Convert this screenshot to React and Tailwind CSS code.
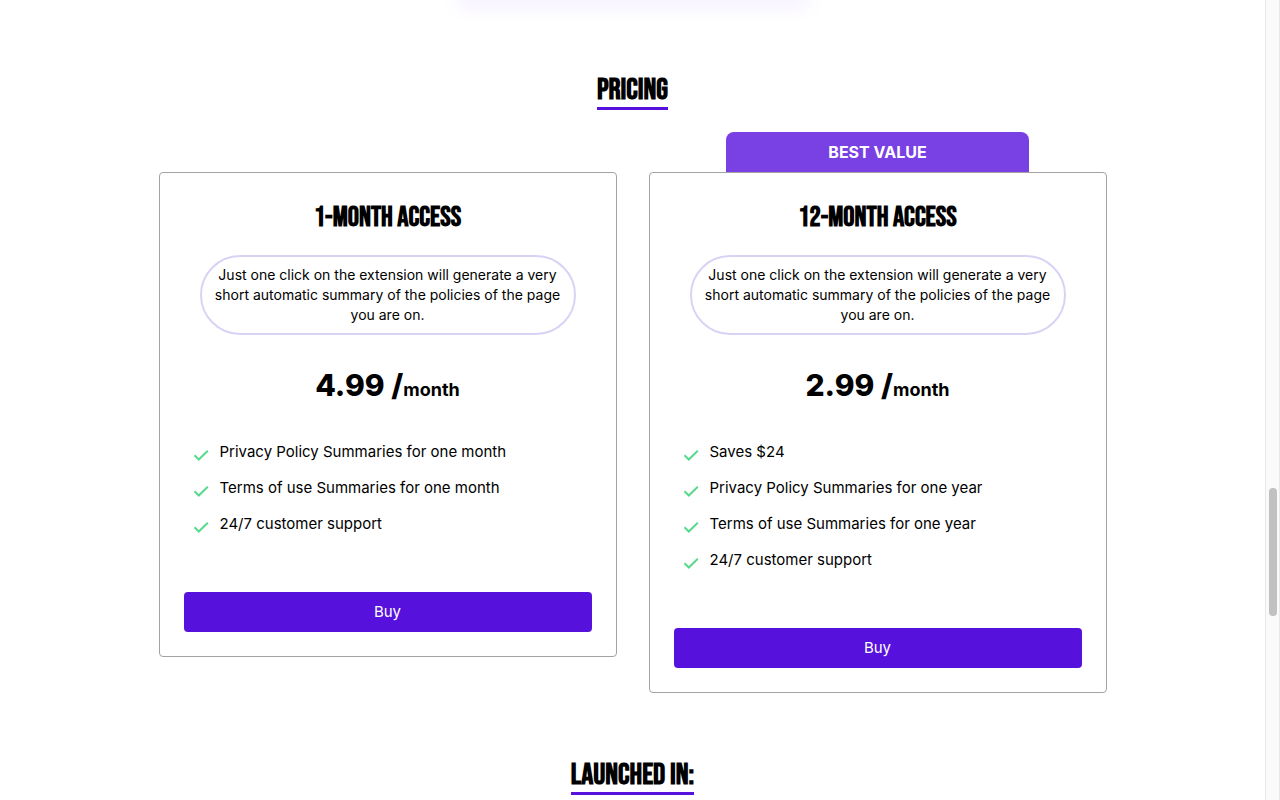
import React from "react";

const display = "font-['Bebas_Neue','Liberation_Sans_Narrow','Roboto_Condensed','Liberation_Sans',sans-serif] font-bold";

const summary =
  "Just one click on the extension will generate a very short automatic summary of the policies of the page you are on.";

const plans = [
  {
    name: "1-MONTH ACCESS",
    price: "4.99",
    features: [
      "Privacy Policy Summaries for one month",
      "Terms of use Summaries for one month",
      "24/7 customer support",
    ],
  },
  {
    name: "12-MONTH ACCESS",
    price: "2.99",
    badge: "BEST VALUE",
    features: [
      "Saves $24",
      "Privacy Policy Summaries for one year",
      "Terms of use Summaries for one year",
      "24/7 customer support",
    ],
  },
];

function Check() {
  return (
    <svg className="mt-2 size-4 shrink-0" viewBox="0 0 16 16" fill="none" stroke="#57d98c" strokeWidth="2" aria-hidden="true">
      <path d="M1.5 7.3 5.8 11.5 14.8 2.8" />
    </svg>
  );
}

function SectionTitle({ children }) {
  return (
    <h2 className={`${display} border-b-[3px] border-[#5611dc] text-[30px] leading-[34px]`}>{children}</h2>
  );
}

function Plan({ plan }) {
  return (
    <div className="flex min-w-0 flex-1 flex-col items-center">
      <div className="flex h-10 w-full justify-center">
        {plan.badge && (
          <p className="w-[66%] rounded-t-lg bg-[#7940e4] text-center font-bold leading-10 text-white">{plan.badge}</p>
        )}
      </div>
      <article className="w-full rounded border border-[#a3a3a3] px-6 pb-6 pt-6 text-center">
        <h3 className={`${display} text-[28px] leading-[42px]`}>{plan.name}</h3>
        <p className="mx-4 mt-4 rounded-full border-2 border-[#d8d3f5] px-2 py-2 text-sm leading-5">{summary}</p>
        <p className="mt-8 text-3xl font-extrabold leading-9">
          {plan.price} /<span className="text-lg font-bold leading-9">month</span>
        </p>
        <ul className="mt-8 flex flex-col gap-3 px-[9px] text-left text-[15px]">
          {plan.features.map((feature) => (
            <li key={feature} className="flex gap-[11px] leading-6">
              <Check />
              {feature}
            </li>
          ))}
        </ul>
        <button type="button" className="mt-14 h-10 w-full rounded bg-[#5611dc] text-[15px] text-white">
          Buy
        </button>
      </article>
    </div>
  );
}

export default function App() {
  return (
    <div className="flex h-screen overflow-hidden bg-white font-['Inter',sans-serif] text-base text-black">
      <main className="flex min-w-0 flex-1 flex-col items-center">
        <div className="h-0 w-[344px] shrink-0 shadow-[0_0_20px_4px_#e9dffd]" />
        <section className="flex w-full flex-col items-center pt-[73px]">
          <SectionTitle>PRICING</SectionTitle>
          <div className="mt-[22px] flex w-full max-w-[948px] items-start gap-8">
            {plans.map((plan) => (
              <Plan key={plan.name} plan={plan} />
            ))}
          </div>
        </section>
        <section className="flex w-full flex-col items-center pt-[65px]">
          <SectionTitle>LAUNCHED IN:</SectionTitle>
        </section>
      </main>
      <div className="w-[15px] shrink-0 border-x border-[#e8e8e8] bg-[#fafafa] pl-[3px]" aria-hidden="true">
        <div className="h-[61vh]" />
        <div className="h-[16vh] w-2 rounded-full bg-[#c1c1c1]" />
      </div>
    </div>
  );
}
